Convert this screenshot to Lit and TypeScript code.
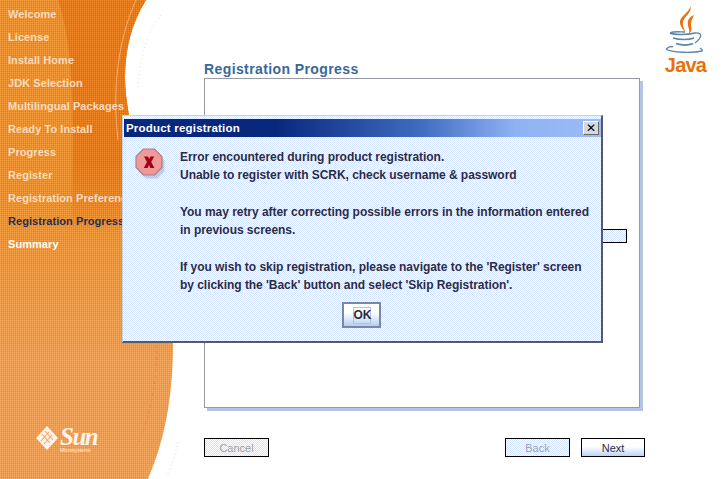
import { LitElement, html, css, svg } from "lit";
import { customElement } from "lit/decorators.js";

const STEPS: { label: string; cls?: string }[] = [
  { label: "Welcome" }, { label: "License" }, { label: "Install Home" }, { label: "JDK Selection" },
  { label: "Multilingual Packages" }, { label: "Ready To Install" }, { label: "Progress" }, { label: "Register" },
  { label: "Registration Preferences" }, { label: "Registration Progress", cls: "active" }, { label: "Summary", cls: "next" },
];

const backdrop = svg`
<svg class="backdrop" width="722" height="479" viewBox="0 0 722 479">
  <defs>
    <pattern id="dark" width="2" height="2" patternUnits="userSpaceOnUse">
      <rect width="2" height="2" fill="#ea7410"/><rect width="1" height="1" fill="#f28a2c"/><rect x="1" y="1" width="1" height="1" fill="#e66c08"/>
    </pattern>
    <pattern id="mid" width="2" height="2" patternUnits="userSpaceOnUse">
      <rect width="2" height="2" fill="#f0882a"/><rect width="1" height="1" fill="#f8a040"/><rect x="1" y="1" width="1" height="1" fill="#ec8020"/>
    </pattern>
    <pattern id="light" width="2" height="2" patternUnits="userSpaceOnUse">
      <rect width="2" height="2" fill="#f39a48"/><rect width="1" height="1" fill="#f7ab62"/><rect x="1" y="1" width="1" height="1" fill="#ef8e38"/>
    </pattern>
    <linearGradient id="fadeMid" x1="0" y1="0" x2="0" y2="1">
      <stop offset="0" stop-color="#fff"/><stop offset=".55" stop-color="#fff"/><stop offset="1" stop-color="#000"/>
    </linearGradient>
    <linearGradient id="fadeDark" x1="0" y1="0" x2="0" y2="1">
      <stop offset="0" stop-color="#fff"/><stop offset=".7" stop-color="#fff"/><stop offset="1" stop-color="#000"/>
    </linearGradient>
    <mask id="maskMid"><rect width="200" height="360" fill="url(#fadeMid)"/></mask>
    <mask id="maskDark"><rect width="200" height="235" fill="url(#fadeDark)"/></mask>
    <clipPath id="shape"><path d="M0 0H146C131 24 125 50 125 78C125 140 173 250 173 345C173 395 165 440 148 479H0Z"/></clipPath>
  </defs>
  <g clip-path="url(#shape)">
    <rect width="200" height="479" fill="url(#light)"/>
    <rect width="200" height="360" fill="url(#mid)" mask="url(#maskMid)"/>
    <path d="M58 0H200V235H72C72 150 78 60 58 0Z" fill="url(#dark)" mask="url(#maskDark)"/>
    <path d="M136 0C118 40 112 90 118 140" fill="none" stroke="#f6ad6e" stroke-width="1"/>
    <path d="M157 345C157 380 150 420 137 445" fill="none" stroke="#f0863a" stroke-width="1" stroke-dasharray="3 3"/>
  </g>
  <path d="M161 15C148 30 140 55 138 88" fill="none" stroke="#e8dcec" stroke-width="1" stroke-dasharray="1 3"/>
  <path d="M178 442C175 455 172 465 167 475" fill="none" stroke="#cfdcf0" stroke-width="1" stroke-dasharray="1 3"/>
</svg>`;

const javaCup = svg`
<svg class="cup" width="41" height="48" viewBox="0 0 41 48">
  <path d="M25 0C27 6 14 11 15 18C15.500 22 19 25 20 28C20 24 17 21 18 17C19 11 28 8 25 0Z" fill="#e8720c"/>
  <path d="M29 10C24 12 22 16 23 20C23.500 24 25 25 24 29C28 25 26 22 26 19C26 15 28 13 29 10Z" fill="#e8720c"/>
  <path d="M5 28C9 26 15 27 20 27M5 28C9 30 22 30 30 28" fill="none" stroke="#5b87ab" stroke-width="1.400"/>
  <path d="M30 28C37 27 38 32 30 38M8 33C14 35 24 35 29 33" fill="none" stroke="#5b87ab" stroke-width="1.400"/>
  <path d="M11 38.500C17 40.500 23 40.500 28 38.500" fill="none" stroke="#5b87ab" stroke-width="1.800"/>
  <path d="M1 44C6 40 8 42 8 42M1 44C6 48 28 48 37 46C38 45 36 44 35 43" fill="none" stroke="#5b87ab" stroke-width="1.400"/>
</svg>`;

const sunMark = svg`
<svg class="sun-mark" width="22" height="24" viewBox="0 0 22 24">
  <path d="M11 0L22 12L11 24L0 12Z" fill="#fff3ea"/>
  <path d="M6 8L14 17M9 5L17 14M13 6L5 15M16 9L8 18" stroke="#f5a767" stroke-width="1.100" fill="none"/>
</svg>`;

const errorIcon = svg`
<svg width="30" height="32" viewBox="0 0 30 32">
  <path d="M9 3H21L28 10V21L21 28H9L2 21V10Z" fill="#8aa0c8" opacity=".45" transform="translate(1.500 2.500)"/>
  <path d="M8.500 1H19.500L27 8.500V19.500L19.500 27H8.500L1 19.500V8.500Z" fill="#ef9a98" stroke="#a88080" stroke-width="1.200"/>
  <path d="M9 8.500H13L14.200 11L15.400 8.500H19.200L16.200 14L19.400 20H15.400L14 17L12.600 20H8.800L12 14Z" fill="#a00018"/>
</svg>`;

@customElement("app-root")
export class AppRoot extends LitElement {
  static styles = css`
    :host { display: block; position: relative; width: 722px; height: 479px; overflow: hidden; background: #fff; font-family: "Liberation Sans", Arial, sans-serif; }
    .backdrop { position: absolute; left: 0; top: 0; }
    .layout { position: relative; display: grid; grid-template-columns: 204px 1fr; height: 479px; }

    .nav { display: flex; flex-direction: column; gap: 3px; padding: 4px 0 0 8px; white-space: nowrap; min-width: 0; }
    .step { height: 20px; line-height: 20px; font-size: 11px; font-weight: 700; letter-spacing: .06px; color: #f6dcc4; }
    .step.active { color: #2c2c48; }
    .step.next { color: #fff; }
    .sun { margin-top: 169px; margin-left: 28px; display: flex; align-items: flex-start; gap: 2px; color: #fff3ea; }
    .sun-word { display: flex; flex-direction: column; }
    .sun-name { font: italic 700 25px/22px "Liberation Serif", serif; letter-spacing: -1.500px; }
    .sun-sub { font-size: 5px; line-height: 5px; }

    .main { display: flex; flex-direction: column; }
    .head { width: 502px; height: 78px; display: flex; justify-content: space-between; align-items: flex-end; }
    .title { font-size: 14px; font-weight: 700; color: #38689a; line-height: 18px; letter-spacing: .4px; }
    .logo { align-self: flex-start; margin-top: 5px; display: flex; flex-direction: column; align-items: center; width: 41px; }
    .java { font-size: 20px; line-height: 21px; font-weight: 700; margin-top: 2px; color: #e8720c; letter-spacing: -.8px; }
    .panel { width: 436px; height: 330px; box-sizing: border-box; border: 1px solid #9a9aa6; background: #fff; box-shadow: 3px 3px 0 #b4c4e4; padding: 150px 12px 0 15px; }
    .bar { height: 14px; box-sizing: border-box; border: 1px solid #000; background: repeating-conic-gradient(#d6e5ff 0 25%, #fff 0 50%) 0 0 / 2px 2px; }

    .actions { width: 441px; display: flex; gap: 11px; margin-top: 30px; }
    .btn { width: 65px; height: 19px; box-sizing: border-box; border: 1px solid #000; padding: 0; font: 400 11px "Liberation Sans", Arial, sans-serif; color: #2c2c48; background: linear-gradient(#fff 45%, #b8d4f8); }
    .btn.next { width: 64px; }
    .btn[disabled] { color: #a0a0ac; background: repeating-conic-gradient(#d6e5ff 0 25%, #fff 0 50%) 0 0 / 2px 2px; }
    .spacer { flex: 1; }

    .dialog { position: absolute; left: 122px; top: 115px; width: 481px; height: 228px; box-sizing: border-box; padding: 3px 0 2px 1px; display: flex; flex-direction: column; border: 1px solid #c4d0e4; border-right: 2px solid #555a6a; border-bottom: 2px solid #555a6a; background: repeating-conic-gradient(#d6e5ff 0 25%, #fff 0 50%) 0 0 / 2px 2px; }
    .titlebar { height: 18px; flex: none; display: flex; align-items: center; justify-content: space-between; padding: 0 2px 0 2px; background: linear-gradient(90deg, #08287e 0 32%, #3f6cc0 62%, #8fb2f4 82%, #9cbcf6); }
    .titlebar span { color: #fff; font-size: 11.500px; font-weight: 700; letter-spacing: .2px; }
    .close { width: 16px; height: 14px; box-sizing: border-box; padding: 0; border: 1px solid; border-color: #fff #666 #666 #fff; background: #d8d8d8; color: #000; font: 700 12px/11px "DejaVu Sans", sans-serif; text-align: center; }
    .body { flex: 1; display: flex; padding: 11px 0 0 11px; }
    .icon { width: 45px; flex: none; }
    .msg { display: flex; flex-direction: column; flex: 1; }
    .msg p { margin: 0 0 19px; font-size: 12px; line-height: 18px; font-weight: 700; color: #2c2c40; white-space: nowrap; letter-spacing: -.04px; }
    .ok-row { display: flex; padding-left: 162px; margin-top: -11px; }
    .ok { width: 39px; height: 26px; box-sizing: border-box; padding: 0; border: 2px solid #7888a8; background: linear-gradient(#fff 40%, #b4cef2); display: flex; align-items: center; justify-content: center; }
    .ok span { display: block; width: 18px; height: 17px; line-height: 15px; box-sizing: border-box; border: 1px solid #b0c4e8; font-size: 12px; font-weight: 700; color: #2c2c40; }
  `;

  render() {
    return html`
      ${backdrop}
      <div class="layout">
        <nav class="nav">
          ${STEPS.map((s) => html`<div class="step ${s.cls ?? ""}">${s.label}</div>`)}
          <div class="sun">
            ${sunMark}
            <div class="sun-word"><span class="sun-name">Sun</span><span class="sun-sub">Microsystems</span></div>
          </div>
        </nav>
        <main class="main">
          <div class="head">
            <div class="title">Registration Progress</div>
            <div class="logo">${javaCup}<span class="java">Java</span></div>
          </div>
          <div class="panel"><div class="bar"></div></div>
          <div class="actions">
            <button class="btn" disabled>Cancel</button>
            <div class="spacer"></div>
            <button class="btn" disabled>Back</button>
            <button class="btn next">Next</button>
          </div>
        </main>
      </div>
      <section class="dialog">
        <div class="titlebar"><span>Product registration</span><button class="close">✕</button></div>
        <div class="body">
          <div class="icon">${errorIcon}</div>
          <div class="msg">
            <p>Error encountered during product registration.<br />Unable to register with SCRK, check username &amp; password</p>
            <p>You may retry after correcting possible errors in the information entered<br />in previous screens.</p>
            <p>If you wish to skip registration, please navigate to the 'Register' screen<br />by clicking the 'Back' button and select 'Skip Registration'.</p>
            <div class="ok-row"><button class="ok"><span>OK</span></button></div>
          </div>
        </div>
      </section>
    `;
  }
}
